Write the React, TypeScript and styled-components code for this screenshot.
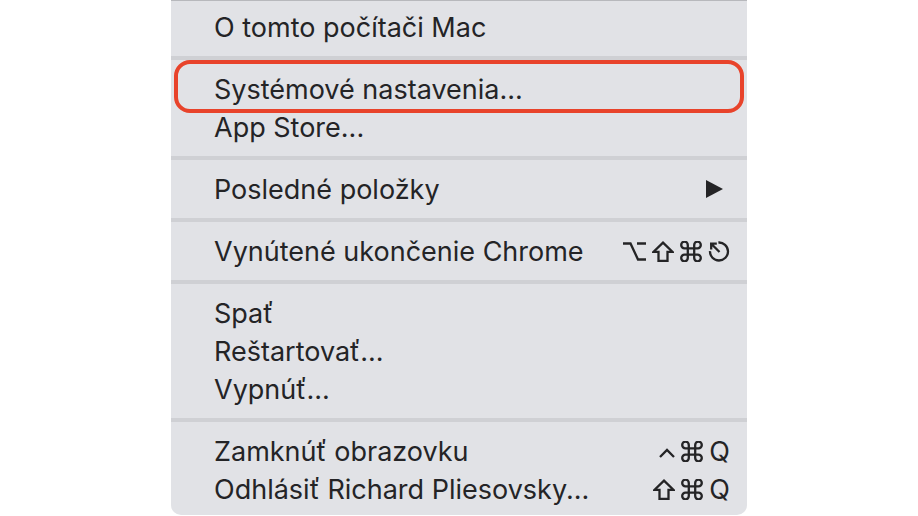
import styled, { createGlobalStyle } from "styled-components";

const Global = createGlobalStyle`
  html, body {
    margin: 0;
    padding: 0;
    background: #ffffff;
  }
  body {
    width: 918px;
    height: 516px;
    overflow: hidden;
  }
`;

const Page = styled.div`
  width: 918px;
  height: 516px;
  display: flex;
  justify-content: center;
  align-items: flex-start;
`;

const Menu = styled.div`
  position: relative;
  width: 576px;
  box-sizing: border-box;
  background: #e1e2e6;
  border-top: 1px solid #b7b8bc;
  border-radius: 0 0 10px 10px;
  padding: 7px 0 7px;
  display: flex;
  flex-direction: column;
  font-family: Inter, "Noto Sans", "Liberation Sans", sans-serif;
  color: #242426;
`;

const Group = styled.div`
  display: flex;
  flex-direction: column;
`;

const Separator = styled.div`
  height: 4px;
  background: #cfd0d4;
  margin: 10px 0;
`;

const Row = styled.div`
  height: 38px;
  display: flex;
  align-items: center;
  justify-content: space-between;
  padding: 0 17px 0 43px;
  font-size: 27px;
`;

const Label = styled.span`
  white-space: nowrap;
`;

const Keys = styled.span`
  display: flex;
  align-items: center;
  gap: 6px;
  flex-shrink: 0;
`;

const KeyIcon = styled.svg<{ $top?: boolean }>`
  display: block;
  flex-shrink: 0;
  fill: none;
  stroke: currentColor;
  stroke-width: 2.3;
  align-self: ${(p) => (p.$top ? "flex-start" : "center")};
  margin-top: ${(p) => (p.$top ? "10px" : "0")};
`;

const Letter = styled.span`
  width: 21px;
  text-align: center;
  line-height: 1;
`;

const Arrow = styled.span`
  width: 0;
  height: 0;
  border-top: 9.5px solid transparent;
  border-bottom: 9.5px solid transparent;
  border-left: 17px solid #242426;
  margin-right: 7px;
`;

const Highlight = styled.div`
  position: absolute;
  left: 3px;
  top: 59px;
  width: 570px;
  height: 53px;
  box-sizing: border-box;
  border: 4px solid #e8432b;
  border-radius: 16px;
  pointer-events: none;
`;

type KeyName = "opt" | "shift" | "cmd" | "esc" | "ctrl" | "Q";

const Key = ({ k }: { k: KeyName }) => {
  switch (k) {
    case "opt":
      return (
        <KeyIcon width="23" height="21" viewBox="0 0 23 21">
          <path d="M0 2.5 H7.5 L15 18.5 H23 M14 2.5 H23" />
        </KeyIcon>
      );
    case "shift":
      return (
        <KeyIcon width="22" height="21" viewBox="0 0 22 21" strokeLinejoin="miter">
          <path d="M11 1.6 L20.4 10.8 H15.5 V19.8 H6.5 V10.8 H1.6 Z" />
        </KeyIcon>
      );
    case "cmd":
      return (
        <KeyIcon width="22" height="21" viewBox="0 0 22 21">
          <path d="M14.2 4 V17 A3.3 3.3 0 1 0 17.5 13.7 H4.5 A3.3 3.3 0 1 0 7.8 17 V4 A3.3 3.3 0 1 0 4.5 7.3 H17.5 A3.3 3.3 0 1 0 14.2 4 Z" />
        </KeyIcon>
      );
    case "esc":
      return (
        <KeyIcon width="22" height="21" viewBox="0 0 22 21">
          <path d="M10.4 1.5 A9 9 0 1 1 2 10.1" />
          <path d="M11.5 11 L3.2 2.7 M2 2.7 H8.8 M3.2 1.6 V8.4" />
        </KeyIcon>
      );
    case "ctrl":
      return (
        <KeyIcon $top width="16" height="10" viewBox="0 0 16 10">
          <path d="M1 9 L8 2 L15 9" />
        </KeyIcon>
      );
    default:
      return <Letter>{k}</Letter>;
  }
};

type Item = { label: string; keys?: KeyName[]; submenu?: boolean };

const groups: Item[][] = [
  [{ label: "O tomto počítači Mac" }],
  [{ label: "Systémové nastavenia..." }, { label: "App Store..." }],
  [{ label: "Posledné položky", submenu: true }],
  [{ label: "Vynútené ukončenie Chrome", keys: ["opt", "shift", "cmd", "esc"] }],
  [{ label: "Spať" }, { label: "Reštartovať..." }, { label: "Vypnúť..." }],
  [
    { label: "Zamknúť obrazovku", keys: ["ctrl", "cmd", "Q"] },
    { label: "Odhlásiť Richard Pliesovsky...", keys: ["shift", "cmd", "Q"] },
  ],
];

export default function App() {
  return (
    <Page>
      <Global />
      <Menu>
        {groups.map((g, gi) => (
          <div key={gi}>
            {gi > 0 && <Separator />}
            <Group>
              {g.map((item) => (
                <Row key={item.label}>
                  <Label>{item.label}</Label>
                  {item.submenu && <Arrow />}
                  {item.keys && (
                    <Keys>
                      {item.keys.map((k, i) => (
                        <Key key={i} k={k} />
                      ))}
                    </Keys>
                  )}
                </Row>
              ))}
            </Group>
          </div>
        ))}
        <Highlight />
      </Menu>
    </Page>
  );
}
